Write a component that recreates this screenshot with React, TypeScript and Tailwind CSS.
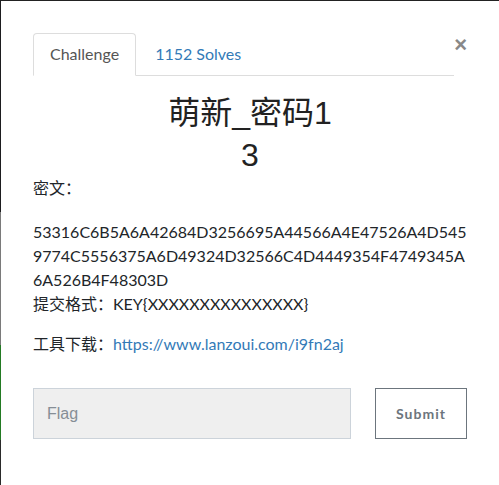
import React from "react";

export default function App() {
  const body = { fontFamily: 'Lato, "Noto Sans CJK SC", sans-serif' };
  return (
    <div className="w-[499px] h-[485px] flex bg-white overflow-hidden">
      <div className="w-px flex flex-col shrink-0">
        <div className="h-[212px] bg-[#1d1d1f]" />
        <div className="h-[133px] bg-[#7a7a7a]" />
        <div className="h-[95px] bg-[#237a23]" />
        <div className="flex-1 bg-[#2a2a2a]" />
      </div>
      <div className="flex-1 flex flex-col border-t border-[#222] text-[#212529]" style={body}>
        <div className="pl-[32px] pr-[32px] pt-[32px]">
          <div className="flex items-start">
            <div className="flex flex-1 border-b border-[#dddddd] text-[16px] leading-[20px]">
              <div className="px-[16px] py-[10px] border border-[#dddddd] border-b-white rounded-t-[4px] -mb-px bg-white text-[#555]">
                Challenge
              </div>
              <div className="ml-[2px] px-[16px] py-[10px] border border-transparent text-[#337ab7]">
                1152 Solves
              </div>
            </div>
            <div
              className="w-[13px] text-right text-[22px] leading-[20px] font-bold text-[#888] mt-[2px]"
              style={{ fontFamily: '"Liberation Sans", Arial, sans-serif' }}
            >
              ×
            </div>
          </div>
          <div
            className="mt-[16px] text-center text-[32px] leading-[42px] text-[#222]"
            style={{ fontFamily: '"Liberation Sans", "Noto Sans CJK SC", sans-serif' }}
          >
            萌新_密码1
            <br />3
          </div>
          <div className="text-[16px] leading-[24px]">
            <p>密文：</p>
            <p className="mt-[20px] whitespace-nowrap">
              53316C6B5A6A42684D3256695A44566A4E47526A4D545
              <br />
              9774C5556375A6D49324D32566C4D4449354F4749345A
              <br />
              6A526B4F48303D
              <br />
              提交格式：KEY{"{"}XXXXXXXXXXXXXXX{"}"}
            </p>
            <p className="mt-[16px]">
              工具下载：<span className="text-[#337ab7]">https://www.lanzoui.com/i9fn2aj</span>
            </p>
          </div>
          <div className="mt-[32px] flex gap-[24px]">
            <div
              className="w-[318px] h-[51px] bg-[#efefef] border border-[#ccd3da] flex items-center pl-[13px] text-[16px] text-[#868e96]"
              style={{ fontFamily: '"Liberation Sans", Arial, sans-serif' }}
            >
              Flag
            </div>
            <div className="w-[92px] h-[51px] border border-[#6c757d] flex items-center justify-center text-[14px] font-bold tracking-[1px] text-[#6c757d]">
              Submit
            </div>
          </div>
        </div>
      </div>
    </div>
  );
}
